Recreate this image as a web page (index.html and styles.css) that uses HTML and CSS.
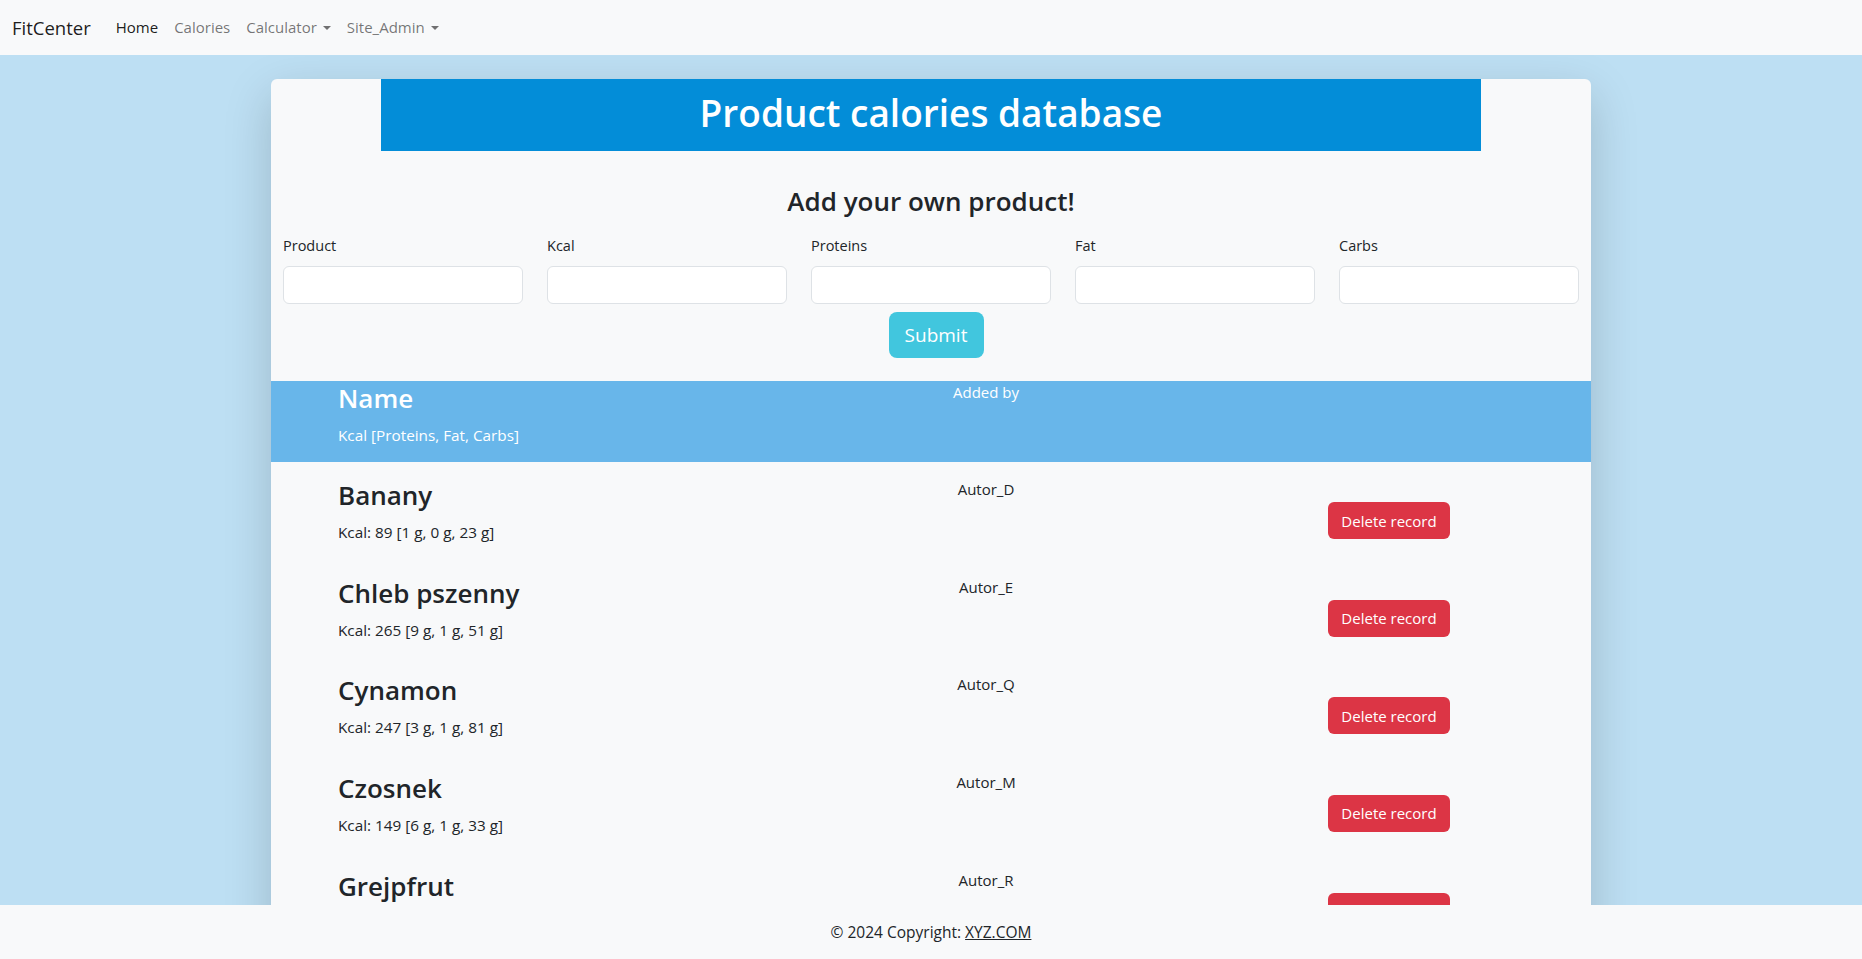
FILE: index.html
```html
<!DOCTYPE html>
<html lang="en">
<head>
<meta charset="utf-8">
<title>FitCenter - Calories</title>
<link rel="stylesheet" href="styles.css">
</head>
<body>
<nav class="navbar">
  <a class="brand" href="#">FitCenter</a>
  <ul class="nav">
    <li><a class="nav-link active" href="#">Home</a></li>
    <li><a class="nav-link" href="#">Calories</a></li>
    <li><a class="nav-link dropdown" href="#">Calculator</a></li>
    <li><a class="nav-link dropdown" href="#">Site_Admin</a></li>
  </ul>
</nav>
<main class="main">
  <section class="card">
    <div class="banner"><h1 class="banner-title">Product calories database</h1></div>
    <h3 class="form-title">Add your own product!</h3>
    <form class="add-form">
      <div class="field"><label>Product</label><input type="text"></div>
      <div class="field"><label>Kcal</label><input type="text"></div>
      <div class="field"><label>Proteins</label><input type="text"></div>
      <div class="field"><label>Fat</label><input type="text"></div>
      <div class="field"><label>Carbs</label><input type="text"></div>
    </form>
    <div class="submit-wrap"><button class="btn-submit" type="button">Submit</button></div>

    <div class="list-head">
      <div class="col-name">
        <h3 class="item-name">Name</h3>
        <p class="item-kcal">Kcal [Proteins, Fat, Carbs]</p>
      </div>
      <div class="col-author">Added by</div>
      <div class="col-action"></div>
    </div>

    <div class="item">
      <div class="col-name"><h3 class="item-name">Banany</h3><p class="item-kcal">Kcal: 89 [1 g, 0 g, 23 g]</p></div>
      <div class="col-author">Autor_D</div>
      <div class="col-action"><button class="btn-delete" type="button">Delete record</button></div>
    </div>
    <div class="item">
      <div class="col-name"><h3 class="item-name">Chleb pszenny</h3><p class="item-kcal">Kcal: 265 [9 g, 1 g, 51 g]</p></div>
      <div class="col-author">Autor_E</div>
      <div class="col-action"><button class="btn-delete" type="button">Delete record</button></div>
    </div>
    <div class="item">
      <div class="col-name"><h3 class="item-name">Cynamon</h3><p class="item-kcal">Kcal: 247 [3 g, 1 g, 81 g]</p></div>
      <div class="col-author">Autor_Q</div>
      <div class="col-action"><button class="btn-delete" type="button">Delete record</button></div>
    </div>
    <div class="item">
      <div class="col-name"><h3 class="item-name">Czosnek</h3><p class="item-kcal">Kcal: 149 [6 g, 1 g, 33 g]</p></div>
      <div class="col-author">Autor_M</div>
      <div class="col-action"><button class="btn-delete" type="button">Delete record</button></div>
    </div>
    <div class="item">
      <div class="col-name"><h3 class="item-name">Grejpfrut</h3><p class="item-kcal">Kcal: 52 [1 g, 0 g, 8 g]</p></div>
      <div class="col-author">Autor_R</div>
      <div class="col-action"><button class="btn-delete" type="button">Delete record</button></div>
    </div>
  </section>
</main>
<footer class="footer">
  <span>© 2024 Copyright: <a href="#" class="footer-link">XYZ.COM</a></span>
</footer>
</body>
</html>
```

FILE: styles.css
```css
* { box-sizing: border-box; }
html, body { height: 100%; }
body {
  margin: 0;
  font-family: "Open Sans", "Noto Sans", "Liberation Sans", sans-serif;
  font-size: 16px;
  line-height: 1.5;
  color: #212529;
  display: flex;
  flex-direction: column;
  overflow: hidden;
}

.navbar {
  height: 55px;
  flex: none;
  background: #f8f9fa;
  display: flex;
  align-items: center;
  padding: 0 12px;
}
.brand {
  font-size: 18.5px;
  color: rgba(0,0,0,.9);
  text-decoration: none;
  margin-right: 17px;
  line-height: 30px;
}
.nav {
  list-style: none;
  margin: 0;
  padding: 0;
  display: flex;
}
.nav-link {
  display: block;
  padding: 8px 8px;
  font-size: 15px;
  color: rgba(0,0,0,.55);
  text-decoration: none;
}
.nav-link.active { color: rgba(0,0,0,.9); }
.nav-link.dropdown::after {
  content: "";
  display: inline-block;
  margin-left: 6px;
  vertical-align: 3px;
  border-top: 4.5px solid currentColor;
  border-left: 4.5px solid transparent;
  border-right: 4.5px solid transparent;
}

.main {
  flex: 1;
  min-height: 0;
  overflow: hidden;
  background: #bddff3;
  padding-top: 24px;
}
.card {
  width: 1320px;
  margin: 0 auto;
  background: #f8f9fa;
  border-radius: 6px 6px 0 0;
  box-shadow: 0 16px 48px rgba(0,0,0,.175);
  min-height: 1000px;
}

.banner {
  width: 1100px;
  margin: 0 auto;
  background: #038dd8;
  height: 72px;
  padding-bottom: 5px;
  display: flex;
  align-items: center;
  justify-content: center;
}
.banner-title {
  margin: 0;
  color: #fff;
  font-size: 37px;
  font-weight: 600;
  line-height: 48px;
}

.form-title {
  margin: 34px 0 15px;
  text-align: center;
  font-size: 26px;
  font-weight: 600;
  line-height: 33.6px;
}
.add-form {
  display: grid;
  grid-template-columns: repeat(5, 1fr);
  column-gap: 24px;
  padding: 0 12px;
}
.field label {
  display: block;
  font-size: 14.5px;
  line-height: 24px;
  margin-bottom: 8px;
}
.field input {
  display: block;
  width: 100%;
  height: 38px;
  border: 1px solid #dee2e6;
  border-radius: 6px;
  background: #fff;
  font: inherit;
}
.submit-wrap {
  display: flex;
  justify-content: center;
  margin-top: 8px;
  padding-left: 10px;
}
.btn-submit {
  width: 95px;
  height: 46px;
  border: none;
  border-radius: 8px;
  background: #41c6de;
  color: #fff;
  font-family: inherit;
  font-size: 19px;
}

.list-head, .item {
  display: grid;
  grid-template-columns: 528px 240px 1fr;
  padding-left: 67px;
}
.list-head {
  margin-top: 23px;
  padding-top: 1px;
  background: #68b6ea;
  color: #fff;
}
.item { padding-top: 17px; }
.item-name {
  margin: 0 0 7.5px;
  font-size: 26px;
  font-weight: 600;
  line-height: 33.6px;
}
.item-kcal {
  margin: 0 0 15.5px;
  font-size: 15.3px;
  line-height: 24px;
}
.col-author {
  margin-top: -2px;
  text-align: center;
  font-size: 15px;
  line-height: 24px;
}
.col-action { padding-left: 222px; padding-top: 23px; }
.btn-delete {
  width: 122px;
  height: 37px;
  border: none;
  border-radius: 6px;
  background: #dc3545;
  color: #fff;
  font-family: inherit;
  font-size: 15px;
}

.footer {
  height: 54px;
  flex: none;
  background: #f8f9fa;
  display: flex;
  align-items: center;
  justify-content: center;
  padding-top: 2px;
  font-size: 15.5px;
  color: #212529;
}
.footer-link { color: #212529; }
```
